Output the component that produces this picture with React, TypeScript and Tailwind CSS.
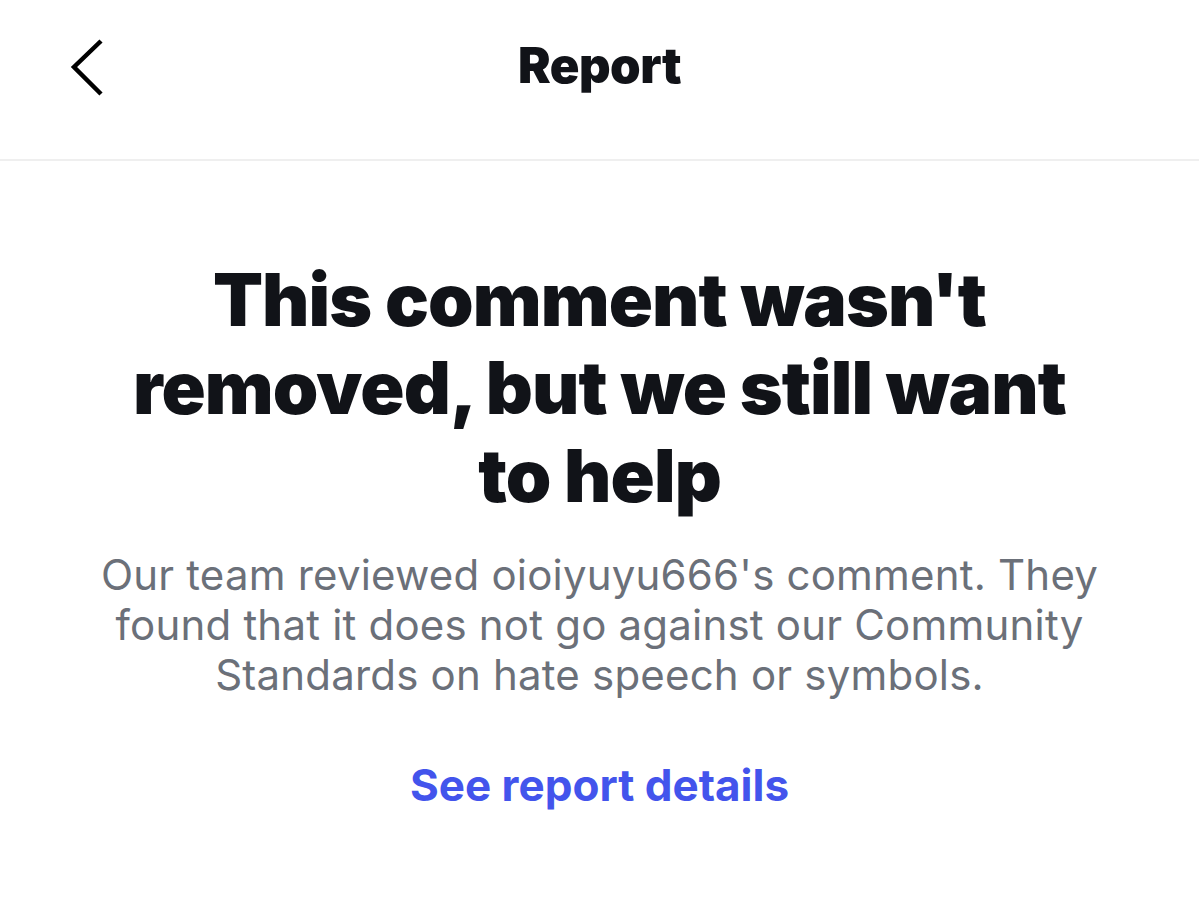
import React from "react";

export default function App() {
  return (
    <div className="w-[1199px] h-[906px] bg-white overflow-hidden" style={{ fontFamily: "Inter, 'Noto Sans', sans-serif" }}>
      <header className="relative h-[161px] border-b-2 border-[#efefef] flex items-start justify-center">
        <div className="absolute left-[68px] top-[38px]">
          <svg width="40" height="60" viewBox="0 0 40 60" fill="none">
            <path d="M33 3 L6 29 L33 56" stroke="#000" strokeWidth="4.5" strokeLinecap="butt" strokeLinejoin="miter" />
          </svg>
        </div>
        <h1 className="mt-[36px] text-[49px] leading-[60px] font-black text-[#111318] tracking-[-0.5px]">Report</h1>
      </header>
      <main className="flex flex-col items-center px-[40px]">
        <h2 className="mt-[95px] text-center text-[73px] leading-[88px] font-black text-[#111318] tracking-[-0.9px] max-w-[960px]">
          This comment wasn't removed, but we still want to help
        </h2>
        <p className="mt-[30px] text-center text-[42px] leading-[50px] text-[#6b7079] tracking-[0.2px] max-w-[1020px]">
          Our team reviewed oioiyuyu666's comment. They found that it does not go against our Community Standards on hate speech or symbols.
        </p>
        <a className="mt-[58px] text-[44px] leading-[54px] font-bold text-[#4354ec]">See report details</a>
      </main>
    </div>
  );
}
